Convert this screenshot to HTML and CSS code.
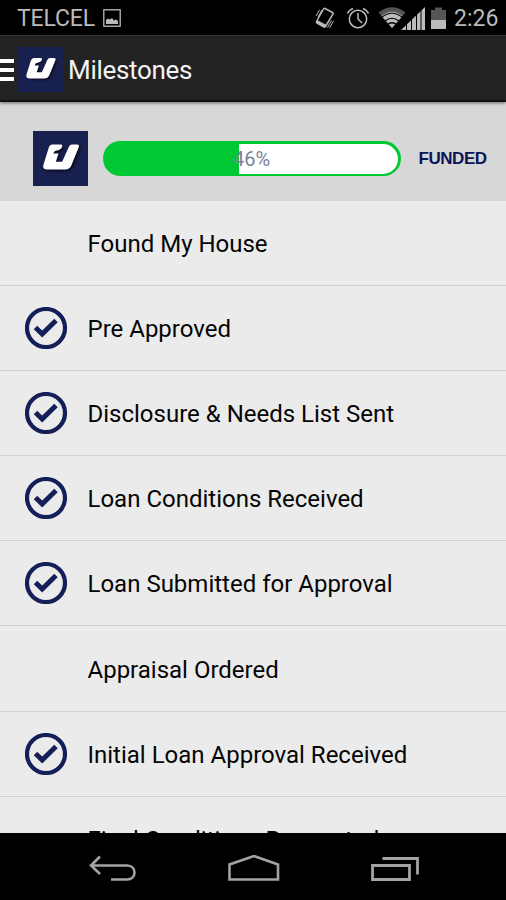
FILE: index.html
```html
<!DOCTYPE html>
<html lang="en">
<head>
<meta charset="utf-8">
<title>Milestones</title>
<link rel="stylesheet" href="styles.css">
</head>
<body>
<svg class="defs" width="0" height="0" aria-hidden="true">
  <symbol id="logo" viewBox="0 0 166 166">
    <rect width="166" height="166" fill="#18204f"/>
    <g class="mark">
      <path d="M58 41H84Q90 41 88 47L86 52Q80 58 66 60L61 68H77L69 93H88L108 48Q111 41 118 41H133Q141 41 138 49L116 103Q110 116 97 116H42Q27 116 32 100L47 52Q50 41 58 41Z"/>
    </g>
  </symbol>
  <symbol id="check" viewBox="0 0 42 42">
    <circle cx="21" cy="21" r="19" fill="none" stroke="#141f57" stroke-width="4.2"/>
    <path d="M10.500 20.500L17.200 27L31 13.500" fill="none" stroke="#141f57" stroke-width="5"/>
  </symbol>
</svg>
<div class="screen">
  <header class="status">
    <span class="carrier">TELCEL</span>
    <svg class="picture" width="18" height="18" viewBox="0 0 18 18"><rect x=".8" y=".8" width="16.4" height="16.4" fill="none" stroke="#bbb" stroke-width="1.3"/><path d="M3 15V11L5 9.500L7 10.500L9 9L11 11.500L13 10.500L15 12V15Z" fill="#bbb"/></svg>
    <svg class="tray" width="136" height="26" viewBox="0 0 136 26">
      <g fill="none" stroke="#bbb" stroke-width="1.5">
        <path d="M11 3.500L18.500 7.500Q19.500 8 19 9L11.500 21.500Q11 22.400 10 22L3 18Q2.100 17.500 2.500 16.500L9.500 4Q10 3 11 3.500Z"/>
        <path d="M3 16.500L11.500 21" stroke-width="2.600"/>
        <path d="M2 11L5.500 5M4 12L8 5M13.500 22.500L17.500 15.500M15.500 23L19.500 16" stroke-width="1"/>
        <circle cx="44" cy="14" r="8.700"/><path d="M44 8V14L48 18M33.500 8.500Q35 5 39 3.500M49 3.500Q53 5 54.500 8.500"/>
      </g>
      <path d="M64.500 7.500Q78 -3 91.500 7.500L78 23Z" fill="#555"/>
      <path d="M67.500 11Q78 2.500 88.500 11L78 23Z" fill="#bbb"/>
      <path d="M67.500 12.500Q78 4 88.500 12.500M70.500 16.500Q78 10 85.500 16.500M73 20Q78 15.500 83 20" fill="none" stroke="#000" stroke-width="1.200"/>
      <path d="M87 25L111 2V25Z" fill="#bbb"/><path d="M92.500 12V25M97.500 8V25M102.500 3V25M107 1V25" stroke="#000" stroke-width="1"/>
      <path d="M117 5H121V2.500H128V5H132V15H117Z" fill="#555"/><path d="M117 15H132V24H117Z" fill="#bbb"/>
    </svg>
    <span class="clock">2:26</span>
  </header>
  <div class="appbar">
    <div class="burger"><i></i><i></i><i></i></div>
    <svg class="applogo" width="45" height="45"><use href="#logo"/></svg>
    <h1>Milestones</h1>
  </div>
  <section class="progress">
    <svg width="55" height="55"><use href="#logo"/></svg>
    <div class="bar"><div class="fill" style="width:46%"></div><span>46%</span></div>
    <strong>FUNDED</strong>
  </section>
  <main>
    <div class="row"><i></i><span>Found My House</span></div>
    <div class="row"><svg><use href="#check"/></svg><span>Pre Approved</span></div>
    <div class="row"><svg><use href="#check"/></svg><span>Disclosure &amp; Needs List Sent</span></div>
    <div class="row"><svg><use href="#check"/></svg><span>Loan Conditions Received</span></div>
    <div class="row"><svg><use href="#check"/></svg><span>Loan Submitted for Approval</span></div>
    <div class="row"><i></i><span>Appraisal Ordered</span></div>
    <div class="row"><svg><use href="#check"/></svg><span>Initial Loan Approval Received</span></div>
    <div class="row"><i></i><span>Final Conditions Requested</span></div>
  </main>
  <nav>
    <svg width="48" height="30" viewBox="0 0 48 30"><path d="M11 1.500L2 10.500L11 19M3 10.500H38C48 10.500 48 24.500 38 24.500H22" fill="none" stroke="#a3a3a3" stroke-width="2.600"/></svg>
    <svg width="52" height="30" viewBox="0 0 52 30"><path d="M1.500 24.500V9.500L26 1L50 9.500V24.500Z" fill="none" stroke="#a3a3a3" stroke-width="2.600"/></svg>
    <svg width="50" height="30" viewBox="0 0 50 30"><path d="M1.500 10.500H38.500V24.500H1.500ZM11.500 3.500H46.500V19.500" fill="none" stroke="#a3a3a3" stroke-width="2.800"/></svg>
  </nav>
</div>
</body>
</html>
```
FILE: styles.css
```css
* { box-sizing: border-box; }
body { margin: 0; font-family: Roboto, "Noto Sans", sans-serif; background: #000; }
.defs { display: block; height: 0; }
.screen { width: 506px; height: 900px; display: flex; flex-direction: column; overflow: hidden; }
svg { flex: none; display: block; }
.status { height: 35px; flex: none; display: flex; align-items: center; padding: 1px 8px 0 17px; color: #bbb; font-size: 23px; background: #000; }
.carrier { width: 86px; letter-spacing: -.15px; }
.tray { margin-left: auto; margin-right: 4px; }
.clock { width: 44px; white-space: nowrap; }
.appbar { height: 67px; flex: none; display: flex; align-items: center; background: #222; border-top: 1px solid #303030; border-bottom: 2px solid #111; box-shadow: 0 1px 3px #0008; z-index: 1; padding-top: 2px; }
.burger { width: 14px; display: grid; gap: 5px; padding-top: 1px; }
.burger i { height: 4px; background: #fff; }
.applogo { margin-left: 4px; }
h1 { margin: 2px 0 0 5px; color: #f4f4f4; font-size: 26px; font-weight: 400; letter-spacing: -.3px; }
.mark { fill: #fff; filter: drop-shadow(5px 5px 4px #0009); }
.progress { height: 99px; flex: none; display: flex; align-items: flex-start; padding: 29px 0 0 32.5px; background: #d7d7d7; }
.bar { width: 298px; height: 35px; margin: 10px 0 0 15px; display: grid; background: #00c832; border-radius: 18px; padding: 3px; overflow: hidden; }
.bar > * { grid-area: 1 / 1; }
.bar::before { content: ""; grid-area: 1 / 1; background: #fff; border-radius: 15px; }
.fill { background: #00c832; margin-left: -1px; }
.bar span { text-align: center; line-height: 30px; font-size: 20px; color: #7b8497; }
.progress strong { margin: 18px 0 0 18px; color: #0b1556; font: bold 17px/20px "Liberation Sans", sans-serif; letter-spacing: -.45px; }
main { flex: 1; min-height: 0; overflow: hidden; background: #ebebeb; }
.row { height: 85.1px; padding-left: 24.5px; display: flex; align-items: center; border-bottom: 1px solid #cfcfcf; color: #050505; font-size: 24px; }
.row span { padding-top: 2px; }
.row > i, .row > svg { width: 42px; height: 42px; margin-right: 21px; flex: none; }
nav { height: 67px; flex: none; display: flex; align-items: flex-start; justify-content: center; padding: 22px 0 0 3px; gap: 91px; background: #000; }
```
